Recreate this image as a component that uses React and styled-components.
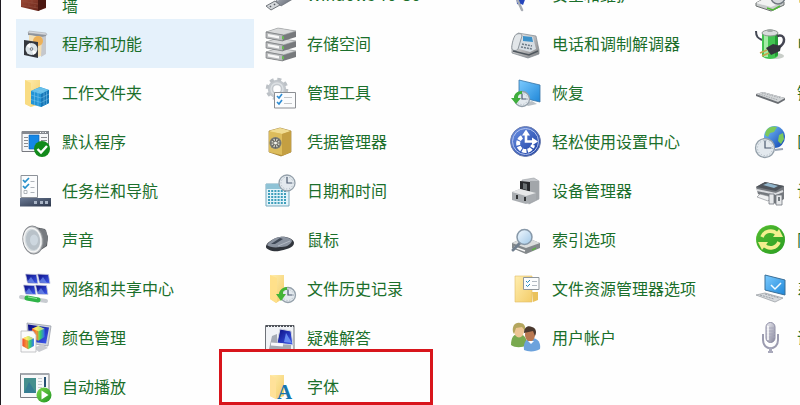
import React from "react";
import styled, { createGlobalStyle } from "styled-components";

const GlobalStyle = createGlobalStyle`
  * { box-sizing: border-box; }
  html, body { margin: 0; background: #fefefe; }
  body { overflow: hidden; }
`;

const Window = styled.main`
  height: 100vh;
  overflow: hidden;
  border-left: 1px solid #1d1a20;
  padding-left: 15px;
  background: #fefefe;
  font-family: "Noto Sans CJK SC", sans-serif;
`;

const ItemGrid = styled.nav`
  display: grid;
  grid-template-columns: repeat(4, 238px);
  grid-auto-rows: 49px;
  column-gap: 7px;
  margin-top: -30px;
`;

const Item = styled.a`
  position: relative;
  grid-column: ${(p) => p.$column};
  display: flex;
  align-items: center;
  gap: 10px;
  padding-left: 4px;
  background: ${(p) => (p.$selected ? "#e5f1fb" : "transparent")};
  color: #1b6f2b;
  text-decoration: none;
`;

const Icon = styled.svg`
  flex: none;
  width: 32px;
  height: 32px;
  overflow: visible;
`;

const Label = styled.span`
  padding-bottom: 2px;
  font-size: 16px;
  line-height: 22px;
  white-space: nowrap;
`;

const Highlight = styled.span`
  position: absolute;
  left: -42px;
  top: -13px;
  width: 214px;
  height: 56px;
  border: 3px solid #d8151c;
`;

const Defs = styled.svg`
  display: block;
  width: 0;
  height: 0;
`;

const gradients = {
  folder: ["#ffeeb0", "#f3cc68"],
  metal: ["#f6f6f6", "#7f8083"],
  steel: ["#c9ced6", "#4c525d"],
  screen: ["#7ccbff", "#1f87d8"],
  navy: ["#0a0c80", "#3e5cf0"],
  gold: ["#f1d572", "#b08422"],
  green: ["#7fd84a", "#1d9422"],
  brick: ["#a9513c", "#5b1d14"],
  globe: ["#7fc8ff", "#0b3fae"],
  ease: ["#6d93e6", "#16399c"],
  glass: ["#f3faff", "#9fc6e6"],
  bar: ["#6b7a94", "#2b354a"],
  mic: ["#f1f1f6", "#85859a"],
};

const Gradients = () => (
  <Defs aria-hidden="true">
    <defs>
      {Object.entries(gradients).map(([id, [from, to]]) => (
        <linearGradient key={id} id={id} x1="0" y1="0" x2="1" y2="1">
          <stop offset="0" stopColor={from} />
          <stop offset="1" stopColor={to} />
        </linearGradient>
      ))}
      <linearGradient id="rainbow" x1="0" y1="0" x2="1" y2="0">
        <stop offset="0" stopColor="#f25a2c" />
        <stop offset=".35" stopColor="#f6e13a" />
        <stop offset=".65" stopColor="#38cf6a" />
        <stop offset="1" stopColor="#2f6ef2" />
      </linearGradient>
    </defs>
  </Defs>
);

const ClockFace = ({ x, y, r }) => (
  <g>
    <circle cx={x} cy={y} r={r} fill="#e3e9ee" stroke="#94a0aa" strokeWidth="1.3" />
    <circle cx={x} cy={y} r={r - 2} fill="none" stroke="#a9b5bf" strokeWidth="1" strokeDasharray="1 2" />
    <path d={`M${x} ${y - r + 2}V${y}H${x + r - 3}`} fill="none" stroke="#4c5b70" strokeWidth="1.2" />
  </g>
);

const Cube = ({ x, y, s }) => (
  <g transform={`translate(${x} ${y}) scale(${s})`}>
    <path d="M0 2.5 6 0l6 2.5v8L6 14l-6-3.5z" fill="url(#rainbow)" />
    <path d="M0 2.5 6 0l6 2.5L6 5z" fill="#fff27a" opacity=".7" />
    <path d="M0 2.5 6 5v9l-6-3.5z" fill="#f03830" opacity=".45" />
  </g>
);

const drawings = {
  firewall: (
    <g>
      <path d="M1 18 18 16l8 4v9l-8 3L1 28z" fill="url(#brick)" />
      <path d="m18 20 8-1v9l-8 4z" fill="#4b1710" />
      <path d="M1 22l17 3M1 26l17 3M6 20v3M12 21v4M9 24v3M15 26v3" stroke="#8f4a3a" strokeWidth=".8" />
    </g>
  ),
  programs: (
    <g>
      <path d="m8 4 18 3v3L8 7z" fill="#8f949b" />
      <path d="m9 3 17 2 1 2-19-2z" fill="#d8dade" stroke="#9b9fa5" strokeWidth=".5" />
      <path d="m9 7 14 2v18l-5 2-9-4z" fill="#f2dfb6" />
      <path d="m22 9 4-1v18l-5 3z" fill="#c5c8cd" />
      <circle cx="18" cy="13" r="5" fill="#edb158" />
      <path d="m4 12 14 2v16L4 27z" fill="#34373d" />
      <circle cx="11.5" cy="21" r="6" fill="#dce4e8" />
      <path d="m11.5 21-5-3 3-3zm0 0 5 3-3 3z" fill="#fff" />
      <circle cx="11.5" cy="21" r="1.8" fill="#737b82" />
      <circle cx="11.5" cy="21" r=".8" fill="#fff" />
    </g>
  ),
  workFolders: (
    <g>
      <path d="M5 3h15v24l-9 3-6-3z" fill="url(#folder)" />
      <path d="M5 3 11 6v24l-6-3z" fill="#f9dc83" />
      <path d="m11 14 9-4 9 3v13l-8 4-10-3z" fill="#2294d6" />
      <path d="m11 14 9-4 9 3-8 4z" fill="#66bfe9" />
      <path d="m21 17 8-4v13l-8 4z" fill="#1777b8" />
      <path d="m11 18 10 3 8-4M11 22.500l10 3 8-4M14.500 15v13M18 16v13M24 15.500v13M26.500 14.500v13M15 12l9 3M17 16l8-4" fill="none" stroke="#80c8ec" strokeWidth=".5" />
    </g>
  ),
  defaults: (
    <g>
      <path d="M2 5.500h26.500v20H2z" fill="#f6f7f9" stroke="#77797f" />
      <path d="M2 5h27v3H2z" fill="#858990" />
      <path d="M20 6.500h1m1.500 0h1m1.500 0h1" stroke="#fff" />
      <path d="M9 9h10v14H9z" fill="#1487e6" stroke="#0b60b0" strokeWidth=".6" />
      <path d="M4 11.500h4m-4 3h4m-4 3h4m-4 3h4M21 11.500h6m-6 3h6m-6 3h5" stroke="#8a8d91" />
      <circle cx="22" cy="23" r="8" fill="#128a1b" />
      <path d="m17.500 23 3.500 3.500 6-6.500" fill="none" stroke="#fff" strokeWidth="2.400" />
    </g>
  ),
  taskbar: (
    <g>
      <path d="M1 .500h16.500v22H1z" fill="#fbfcfd" stroke="#8d9299" />
      <path d="m3 5 2 2 4-4M3 11l2 2 4-4" fill="none" stroke="#248fcb" strokeWidth="1.700" />
      <path d="M10.500 6.500h4m-4 6h4m-4 5h4" stroke="#aeb4ba" />
      <path d="M4 15.500h3v3H4z" fill="none" stroke="#a0a5aa" strokeWidth=".8" />
      <path d="M0 23h31v8.500H0z" fill="url(#bar)" />
      <path d="M14 26h3v3h-3zm6 0h3v3h-3zm5 0h3v3h-3z" fill="#a9b4c5" />
    </g>
  ),
  sound: (
    <g>
      <path d="m15 3 10 2 3 8-1 9-11 7z" fill="#55585c" />
      <path d="m20 4 6 2 2 8-2 8-5 3z" fill="#777b80" />
      <ellipse cx="13" cy="16" rx="10" ry="14" fill="#c2c5c8" stroke="#898c90" transform="rotate(-8 13 16)" />
      <ellipse cx="12.500" cy="16" rx="8.500" ry="12" fill="#d3dade" stroke="#f6f6f6" strokeWidth="1.300" transform="rotate(-8 12.500 16)" />
      <ellipse cx="13" cy="16" rx="7" ry="10" fill="#b9c2c9" transform="rotate(-8 13 16)" />
      <ellipse cx="14" cy="16" rx="4" ry="5.500" fill="#cdd7df" />
    </g>
  ),
  network: (
    <g>
      {[[5, 1], [17, 1], [3, 12], [15, 12]].map(([x, y]) => (
        <g key={`${x}-${y}`} transform={`translate(${x} ${y})`}>
          <path d="m.500 0 11 .5 1.500 9-10.500-.5z" fill="url(#navy)" stroke="#c5c9dc" strokeWidth=".8" />
          <path d="m6 3 4 6-8-1z" fill="#7fa1f5" opacity=".6" />
        </g>
      ))}
      <path d="m1 24 25 4" stroke="#c7cbd0" strokeWidth="4" strokeLinecap="round" />
      <path d="m7 25 11 2" stroke="#2fb448" strokeWidth="5" strokeLinecap="round" />
      <path d="m8 24 9 1.500" stroke="#96e89b" />
    </g>
  ),
  color: (
    <g>
      <path d="m7 1 24 3-3 20-20-3z" fill="#d2d6dd" stroke="#8e949f" strokeWidth=".7" />
      <path d="m8 2.500 21 3-3 16-17-2z" fill="url(#navy)" />
      <Cube x={12} y={4} s={1.050} />
      <path d="m14 26 8-4 6 4-9 4z" fill="#c9cbd0" />
      <path d="M1 9h12l3 4v17H1z" fill="#fbfbfb" stroke="#b7b9bc" strokeWidth=".8" />
      <Cube x={2.500} y={14} s={0.950} />
    </g>
  ),
  autoplay: (
    <g>
      <path d="M.5 2.500H29v24H.5z" fill="#f7f8f9" stroke="#787d83" />
      <path d="M.5 2h28.500v2H.5z" fill="#a4a8ae" />
      <path d="M4 7h12v15H4z" fill="#458f8e" />
      <path d="m4 22 5-11 7 11z" fill="#2c7396" opacity=".65" />
      <path d="M18 7.500h4m-4 3h4m-4 3h4m-4 3h4" stroke="#c7cbcf" />
      <path d="M25 6v10" stroke="#275072" strokeWidth="2" />
      <circle cx="24" cy="24" r="7.500" fill="url(#green)" />
      <path d="m21.500 19.500 7 4.500-7 4.500z" fill="#fff" />
    </g>
  ),
  usb: (
    <g>
      <path d="m11 22 17-12 5 7-17 10z" fill="url(#steel)" stroke="#646a72" strokeWidth=".7" />
      <path d="m12 21 16-9" stroke="#f2f3f5" strokeWidth="2" />
      <path d="m1 27 9-5 5 4-9 5z" fill="#d4d7da" stroke="#71767c" />
      <path d="m5 27 1 1m3-3 1 1" stroke="#555a60" strokeWidth="1.500" />
    </g>
  ),
  storage: (
    <g>
      {[20, 10, 0].map((y) => (
        <g key={y} transform={`translate(0 ${y})`}>
          <path d="m1 4 12-4 18 3v6l-13 4L1 10z" fill="#77797c" />
          <path d="m1 4 12-4 18 3-13 4z" fill="#d9dadb" stroke="#a0a2a4" strokeWidth=".6" />
          <path d="m1 4 17 3v6L1 10z" fill="#b9bbbd" stroke="#6d7072" strokeWidth=".6" />
          <path d="m3 6 11 2v2.500L3 8.500z" fill="#f8f8f8" />
          <path d="m17 8 2 .4v3l-2-.4z" fill="#69b955" />
        </g>
      ))}
    </g>
  ),
  tools: (
    <g>
      <circle cx="12" cy="12" r="6.500" fill="none" stroke="#c3c8cd" strokeWidth="5.500" />
      <circle cx="12" cy="12" r="9.800" fill="none" stroke="#bcc1c6" strokeWidth="3" strokeDasharray="4 3.700" />
      <circle cx="12" cy="12" r="6" fill="none" stroke="#dce0e3" strokeWidth="1.500" />
      <path d="M9.500 15.500h21v15.500h-21z" fill="#fbfcfd" stroke="#8b8e93" />
      <path d="m12 19 2 2 3-4m-5 8 2 2 3-4" fill="none" stroke="#2d8bd2" strokeWidth="1.600" />
      <path d="M19 20.500h8m-8 6h8" stroke="#c3c6c9" />
    </g>
  ),
  credential: (
    <g>
      <path d="m4 5 11-3 11 3v21l-10 4-12-4z" fill="url(#gold)" stroke="#957327" strokeWidth=".7" />
      <path d="m4 5 11-3 11 3-9 3z" fill="#f0dc92" />
      <path d="M4 5.500 17 8v21L4 26z" fill="#dcbc5c" />
      <path d="m17 8 9-3v21l-9 4z" fill="#c49f42" />
      <circle cx="10.500" cy="17" r="6" fill="#787a74" />
      <circle cx="10.500" cy="17" r="4" fill="#dadbd0" />
      <path d="M10.500 12v10m-5-5h10m-8.500-3.500 7 7m0-7-7 7" stroke="#64645d" strokeWidth="1.200" />
      <circle cx="10.500" cy="17" r="1.500" fill="#f5f5ed" />
    </g>
  ),
  date: (
    <g>
      <path d="M1 9h23v22H1z" fill="#e4f4fa" stroke="#77a9bd" />
      <path d="M1 9h23v5H1z" fill="#8fc3d6" />
      {[16, 19, 22, 25, 28].map((y) => (
        <path key={y} d={`M3 ${y}h19`} stroke="#3f9fbb" strokeWidth="2" strokeDasharray="2 1.200" />
      ))}
      <ClockFace x={22} y={8} r={8} />
    </g>
  ),
  mouse: (
    <g>
      <path d="M1 22c1-4 8-8 14-9s14 2 14 6c0 5-10 7-15 8S0 26 1 22z" fill="#30343b" />
      <path d="M2 21c3-4 8-8 13-8 5-1 12 2 12 4-2 5-7 6-12 6-5 1-11 0-13-2z" fill="#8b93a0" />
      <path d="m6 20 9-6 3 1-8 5z" fill="#3f4856" />
      <path d="m13 22 12-5" stroke="#b3bac4" />
    </g>
  ),
  history: (
    <g>
      <path d="M5 2h14v23l-8 5-6-4z" fill="url(#folder)" />
      <path d="m5 2 7 3v25l-7-4z" fill="#ffe08a" />
      <ClockFace x={23} y={22} r={7.500} />
      <path d="M22 14c-5 0-8 4-8 7h-3l5 7 5-7h-3c0-3 1-4 4-4z" fill="#43b436" />
    </g>
  ),
  trouble: (
    <g>
      <path d="M.5 3.500H29v24H.5z" fill="#f1f3f6" stroke="#6e7278" />
      <path d="M1 4h28" stroke="#50545b" strokeWidth="2" strokeDasharray="2 1" />
      <path d="m15 7 11 2 2 14-16-2z" fill="url(#navy)" stroke="#d2d6df" />
      <path d="m21 11 6 10-8-1z" fill="#668af0" />
      <path d="m7 14 5-2v10l14 1v4H4z" fill="#a5abb4" />
      <path d="m6 22 12 1" stroke="#f8f9fc" strokeWidth="3" />
    </g>
  ),
  fonts: (
    <g>
      <path d="M5 4h14v21l-8 3-6-3z" fill="url(#folder)" />
      <path d="m5 4 6 3v21l-6-3z" fill="#ffe199" />
      <text x="12" y="28" fill="#1776ae" fontFamily="Liberation Serif, serif" fontSize="21" fontWeight="700">A</text>
    </g>
  ),
  flag: (
    <g>
      <path d="M6 16c5 3 6 0 10 2l-3 8c-3-2-4 0-6-1z" fill="#2445bb" />
      <path d="m7 20 5 11" stroke="#a7acb4" strokeWidth="2.500" strokeLinecap="round" />
    </g>
  ),
  phone: (
    <g>
      <path d="m8 5 18 3 3 14v4l-11 4-16-5v-7z" fill="url(#metal)" stroke="#7e868e" strokeWidth=".7" />
      <path d="m9 7 14 2 3 12-6 3-14-4z" fill="#d6dde3" />
      <path d="m13 8 9 1 1 5-10-1z" fill="#3c91c9" />
      <path d="M7 6c-3 0-6 12-5 15 1 2 5 2 6 0L12 8c0-2-2-3-5-2z" fill="#e2e6e9" stroke="#8f969c" />
      <path d="m12 16 10 2m-11 1 11 2" stroke="#6d7a86" strokeWidth="1.500" strokeDasharray="2 1" />
      <path d="m3 23 16 4 9-4" fill="none" stroke="#4e565d" strokeWidth="1.500" />
    </g>
  ),
  recovery: (
    <g>
      <path d="m9 3 21 5v17L9 20z" fill="url(#screen)" stroke="#3775a6" strokeWidth=".8" />
      <path d="m14 26 8-2 5 3-9 2z" fill="#b9c0c6" />
      <ClockFace x={12} y={22} r={7.500} />
      <path d="M12 14c-5 0-8 3-8 7H1l5 6 5-6H8c0-3 1-4 4-4z" fill="#3fae3c" />
    </g>
  ),
  ease: (
    <g>
      <circle cx="15.500" cy="15.500" r="15" fill="url(#ease)" stroke="#6f7fae" />
      <circle cx="15.500" cy="15.500" r="13" fill="none" stroke="#b7c6ee" />
      <path d="M12 11a7.500 7.500 0 1 0 11 8" fill="none" stroke="#fff" strokeWidth="4" strokeDasharray="4.200 1.200" />
      <path d="M16 7v8.500h8" fill="none" stroke="#fff" strokeWidth="2.600" />
      <path d="m22 11.500 6 4-6 4z" fill="#fff" />
      <path d="m12 9.500 4-6 4 6z" fill="#fff" />
    </g>
  ),
  device: (
    <g>
      <path d="m12 5 12-2 5 3v18l-10 5-8-5z" fill="#c4c7cb" stroke="#9ba0a5" strokeWidth=".6" />
      <path d="m20 6 9 0v18l-10 5z" fill="#a2a6aa" />
      <path d="m10 6 10 1v10l-10-1z" fill="#27292c" />
      <path d="m13 8 4 1v6l-4-1z" fill="#6a7073" />
      <path d="m2 17 8-3 16 4v7l-10 4-14-4z" fill="#a9adb1" />
      <path d="m2 17 8-3 16 4-10 3z" fill="#e7e8e9" />
      <path d="M7 20v4m8-2v4" stroke="#303235" strokeWidth="2" />
    </g>
  ),
  indexing: (
    <g>
      <path d="m2 19 13-6 15 6v5l-14 6-14-6z" fill="#83888b" />
      <path d="m2 19 13-6 15 6-14 5z" fill="#dbdddd" />
      <path d="m4 23 11 4" stroke="#f6f6f6" strokeWidth="1.500" />
      <path d="m22 26 4-2" stroke="#5caf45" strokeWidth="1.500" />
      <path d="m10 19-7 7" stroke="#707e8d" strokeWidth="3" strokeLinecap="round" />
      <circle cx="14.500" cy="13" r="7.500" fill="url(#glass)" stroke="#8798a8" strokeWidth="1.500" />
    </g>
  ),
  explorer: (
    <g>
      <path d="M5 3h17v26H5z" fill="url(#folder)" stroke="#e0bd66" strokeWidth=".6" />
      <path d="M22 19h6v8l-5 2z" fill="#eac25c" />
      <path d="M13.500 4.500H29v12H13.500z" fill="#fbfcfd" stroke="#8f969b" />
      <path d="m16 8 1.500 1.500L20 7m-4 5 1.500 1.500L20 11" fill="none" stroke="#258aba" />
      <path d="M22 8.500h5m-5 4h5" stroke="#b1b9c1" />
    </g>
  ),
  users: (
    <g>
      <path d="M1 23c0-8 3-11 8-11s8 4 8 11c-5 3-12 3-16 0z" fill="#79a94f" />
      <ellipse cx="9" cy="9" rx="5" ry="6.500" fill="#edc594" />
      <path d="M3 10C2 4 5 0 10 1c4 0 6 3 5 8L12 5 6 6 4 12z" fill="#b4a65e" />
      <path d="M14 28c-1-7 2-12 8-12s9 5 8 11c-4 3-12 3-16 1z" fill="#6ca2dc" />
      <ellipse cx="20" cy="13" rx="5" ry="6.500" fill="#b97851" />
      <path d="M14 11c0-6 4-8 8-6 4 1 5 5 3 9l-2-5z" fill="#4a382e" />
      <path d="m18 19 3 3 3-3z" fill="#fff" />
    </g>
  ),
  backup: (
    <g>
      <path d="m1 24 11-6 17 5v3l-13 6-15-5z" fill="#c8cbcb" stroke="#6b706f" />
      <path d="m1 24 11-6 17 5-13 5z" fill="#f1f2f2" />
      <path d="m12 29 6 2 7-4" fill="none" stroke="#50ba37" strokeWidth="1.500" />
      <circle cx="23" cy="18" r="7" fill="#d5d9dc" stroke="#717980" strokeWidth="1.500" />
      <path d="M23 12v6l4 2" fill="none" stroke="#555e66" />
    </g>
  ),
  power: (
    <g>
      <ellipse cx="21" cy="28" rx="8" ry="3" fill="#c9cec9" />
      <path d="M1 3c0 6 2 7 6 9" fill="none" stroke="#424753" strokeWidth="2" />
      <path d="M7 5h16v23c-3 4-13 4-16 0z" fill="#42c451" />
      <path d="M9 7h4v22H9z" fill="#a4eba6" />
      <path d="M20 7h3v20l-3 2z" fill="#249d35" />
      <ellipse cx="15" cy="5" rx="8" ry="3" fill="#d9dddd" stroke="#8e9691" />
      <ellipse cx="15" cy="2.500" rx="3" ry="1.500" fill="#a3aaa7" />
      <path d="M22 8c9-3 9 8 2 11" fill="none" stroke="#454653" strokeWidth="2.500" />
      <path d="m11 20 7-4 8 2-1 5-9 4z" fill="#34353c" />
      <path d="m12 22-7 3m9 0-7 3" stroke="#c5a24a" strokeWidth="1.700" />
    </g>
  ),
  keyboard: (
    <g>
      <path d="m1 17 7-2 22 6v2l-7 4L1 19z" fill="#696d72" />
      <path d="m1 17 7-2 22 6-7 4z" fill="#d3d6d8" />
      <path d="m4 17 19 6m-16-7 19 5" stroke="#a4a8ac" strokeDasharray="1.500 1" />
    </g>
  ),
  region: (
    <g>
      <ellipse cx="19.500" cy="11" rx="10.500" ry="11" fill="url(#globe)" />
      <path d="M11 5c3-5 8-5 11-4l-3 5-4 1-2 4-3-2zm13 4 4-2 1 6-3 5-3-3z" fill="#7cc95a" />
      <path d="m20 24 8-1" stroke="#9aa5b5" strokeWidth="2" />
      <ClockFace x={10} y={22} r={9.500} />
    </g>
  ),
  printer: (
    <g>
      <path d="m1 12 9-5 19 4v13l-8 5L3 19z" fill="#75797e" />
      <path d="m1 12 9-5 19 4-8 5z" fill="#50555b" />
      <path d="m8 10 5-2 10 3-4 2z" fill="#91b5cb" />
      <path d="m2 15 19 4 7-3" fill="none" stroke="#dadcdf" strokeWidth="2" />
      <path d="m5 19 12 3-4 4-11-4z" fill="#f0f1f2" stroke="#83878b" strokeWidth=".6" />
      <path d="M14 19h5v10h-5zm7 1h6v10h-6z" fill="#e6e8ea" stroke="#6f757b" strokeWidth=".8" />
      <path d="M24 22v4" stroke="#747b80" strokeWidth="2" />
    </g>
  ),
  sync: (
    <g>
      <circle cx="15.500" cy="15.500" r="14.500" fill="url(#green)" />
      <circle cx="15.500" cy="15.500" r="14" fill="#35a622" opacity=".6" />
      <path d="M7 13a9 9 0 0 1 15-3M24 18a9 9 0 0 1-15 3" fill="none" stroke="#f2ef8e" strokeWidth="3.600" />
      <path d="M18 13h10l-4-8zM13 18H3l4 8z" fill="#f2ef8e" />
    </g>
  ),
  system: (
    <g>
      <path d="m10 2 20 5v15l-20-5z" fill="url(#screen)" stroke="#396e97" />
      <path d="m16 12 4 4 6-6" fill="none" stroke="#f3fbff" strokeWidth="1.500" />
      <path d="m1 22 9-2 18 5-8 4z" fill="#d7dadd" stroke="#9da2a7" strokeWidth=".8" />
      <path d="m5 22 14 4m-9-5 14 4" stroke="#989fa7" strokeDasharray="2 1" />
    </g>
  ),
  microphone: (
    <g>
      <path d="M8 12v6c0 11 15 11 15 0v-6" fill="none" stroke="#9c9cb0" strokeWidth="2" />
      <rect x="11" y=".5" width="9" height="20" rx="4.500" fill="url(#mic)" stroke="#8d8da4" />
      <path d="M11 6h9m-9 3h9m-9 3h9m-9 3h9" stroke="#a6a6b9" />
      <path d="M13 4v14" stroke="#fff" strokeWidth="1.500" />
      <path d="M14 25h3v4h1v2h-5v-2h1z" fill="#a9a9bb" />
    </g>
  ),
};

const columns = [
  [
    ["firewall", <>Windows Defender 防火<br />墙</>],
    ["programs", "程序和功能"],
    ["workFolders", "工作文件夹"],
    ["defaults", "默认程序"],
    ["taskbar", "任务栏和导航"],
    ["sound", "声音"],
    ["network", "网络和共享中心"],
    ["color", "颜色管理"],
    ["autoplay", "自动播放"],
  ],
  [
    ["usb", "Windows To Go"],
    ["storage", "存储空间"],
    ["tools", "管理工具"],
    ["credential", "凭据管理器"],
    ["date", "日期和时间"],
    ["mouse", "鼠标"],
    ["history", "文件历史记录"],
    ["trouble", "疑难解答"],
    ["fonts", "字体"],
  ],
  [
    ["flag", "安全和维护"],
    ["phone", "电话和调制解调器"],
    ["recovery", "恢复"],
    ["ease", "轻松使用设置中心"],
    ["device", "设备管理器"],
    ["indexing", "索引选项"],
    ["explorer", "文件资源管理器选项"],
    ["users", "用户帐户"],
  ],
  [
    ["backup", "备份和还原"],
    ["power", "电源选项"],
    ["keyboard", "键盘"],
    ["region", "区域"],
    ["printer", "设备和打印机"],
    ["sync", "同步中心"],
    ["system", "系统"],
    ["microphone", "语音识别"],
  ],
];

const rows = columns[0].map((_, row) =>
  columns
    .map((column, index) => ({ entry: column[row], column: index + 1 }))
    .filter(({ entry }) => entry)
);

export default function App() {
  return (
    <Window>
      <GlobalStyle />
      <Gradients />
      <ItemGrid aria-label="控制面板">
        {rows.flat().map(({ entry: [id, label], column }) => (
          <Item key={id} href={`#${id}`} $column={column} $selected={id === "programs"}>
            <Icon viewBox="0 0 32 32" aria-hidden="true">{drawings[id]}</Icon>
            <Label>{label}</Label>
            {id === "fonts" && <Highlight />}
          </Item>
        ))}
      </ItemGrid>
    </Window>
  );
}
